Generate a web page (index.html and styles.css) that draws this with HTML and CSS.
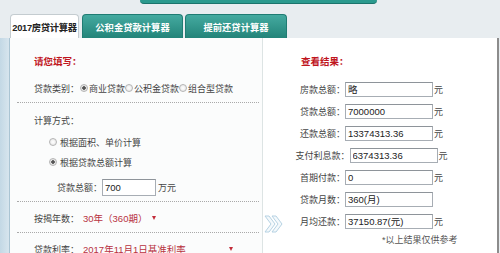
FILE: index.html
```html
<!DOCTYPE html>
<html>
<head>
  <meta charset="utf-8">
  <title>房贷计算器</title>
  <link rel="stylesheet" href="styles.css">
</head>
<body>
  <div class="topbar"><div class="topbtn"></div></div>

  <div class="tabs">
    <div class="tab active">2017房贷计算器</div>
    <div class="tab t2">公积金贷款计算器</div>
    <div class="tab t3">提前还贷计算器</div>
  </div>

  <div class="main">
    <div class="side"></div>
    <div class="panel">
      <!-- input side -->
      <div class="left">
        <div class="sec sec1">
          <div class="title">请您填写：</div>
          <div class="row">贷款类别：<input class="radio first" type="radio" name="kind" checked>商业贷款<input class="radio" type="radio" name="kind">公积金贷款<input class="radio" type="radio" name="kind">组合型贷款</div>
        </div>
        <div class="sec sec2">
          <div class="row">计算方式：</div>
          <div class="row ind r1"><input class="radio" type="radio" name="way">根据面积、单价计算</div>
          <div class="row ind r2"><input class="radio" type="radio" name="way" checked>根据贷款总额计算</div>
          <div class="row ind2">贷款总额：<input class="field amount" type="text" value="700">万元</div>
        </div>
        <div class="sec sec3">
          <div class="row">按揭年数：<span class="sel years">30年（360期）<i class="tri"></i></span></div>
        </div>
        <div class="sec sec4">
          <div class="row">贷款利率：<span class="sel rate">2017年11月1日基准利率<i class="tri"></i></span></div>
        </div>
      </div>

      <!-- result side -->
      <div class="right">
        <div class="title rtitle">查看结果：</div>
        <div class="results">
          <div class="res">房款总额：<input class="field" type="text" value="略"><span class="unit">元</span></div>
          <div class="res">贷款总额：<input class="field" type="text" value="7000000"><span class="unit">元</span></div>
          <div class="res">还款总额：<input class="field" type="text" value="13374313.36"><span class="unit">元</span></div>
          <div class="res">支付利息款：<input class="field" type="text" value="6374313.36"><span class="unit">元</span></div>
          <div class="res">首期付款：<input class="field" type="text" value="0"><span class="unit">元</span></div>
          <div class="res">贷款月数：<input class="field" type="text" value="360(月)"><span class="unit blank">元</span></div>
          <div class="res">月均还款：<input class="field" type="text" value="37150.87(元)"><span class="unit">元</span></div>
        </div>
        <div class="note">*以上结果仅供参考</div>
      </div>

      <svg class="chev" width="20" height="18" viewBox="0 0 20 18">
        <path d="M1 1 H5 L11 9 L5 17 H1 L7 9 Z" fill="#f4f9fc" stroke="#b6d2e3" stroke-width="1"/>
        <path d="M8 1 H12 L18 9 L12 17 H8 L14 9 Z" fill="#f4f9fc" stroke="#b6d2e3" stroke-width="1"/>
      </svg>
    </div>
  </div>
</body>
</html>
```

FILE: styles.css
```css
body { margin: 0; height: 253px; overflow: hidden; background: #e8edf0; font-family: "Liberation Sans", "Noto Sans CJK SC", sans-serif; font-size: 9px; color: #444; }

.topbar { height: 4px; }
.topbtn { margin-left: 140px; width: 237px; height: 3px; background: #2b9a8e; border-bottom: 1px solid #1b746c; border-radius: 0 0 6px 6px; }

.tabs { display: flex; gap: 2px; margin-top: 10px; padding-left: 10px; height: 24px; }
.tab { box-sizing: border-box; height: 24px; display: flex; align-items: center; justify-content: center; white-space: nowrap; border-radius: 4px 4px 0 0; font-size: 9.3px; font-weight: bold; color: #fff; background: linear-gradient(#44aaa0, #238479); border: 1px solid #1f7c73; border-bottom: none; }
.tab.active { width: 69px; padding: 0; letter-spacing: -0.3px; background: #fff; color: #222; border-color: #c4ccd0; margin-right: 1px; }
.tab.t2 { width: 101px; }
.tab.t3 { width: 102px; }

.main { display: flex; height: 215px; }
.side { width: 9px; background: linear-gradient(to right, #c3d8e5, #d7e5ee); border-right: 1px solid #aac4d3; }
.panel { position: relative; flex: 1; display: flex; margin-right: 1px; border-right: 2px solid #8c8c8c; background: #fff; }

.left { width: 242px; padding: 0 3px 0 7px; background: #fbfcfc; border-right: 1px solid #dde4e4; }
.sec { padding-left: 17px; border-bottom: 1px dotted #a9a9a9; }
.sec1 { padding-top: 16px; padding-bottom: 6px; }
.sec2 { padding-top: 9px; padding-bottom: 5px; }
.sec3 { padding-top: 8px; padding-bottom: 6px; }
.sec4 { padding-top: 8px; border-bottom: none; }

.title { height: 16px; line-height: 16px; color: #c0161e; font-weight: bold; font-size: 9.5px; }
.row { display: flex; align-items: center; height: 16px; white-space: nowrap; }
.sec1 .row { margin-top: 10px; }
.ind { padding-left: 15px; }
.r1 { margin-top: 6px; }
.r2 { margin-top: 4px; }
.ind2 { padding-left: 23px; height: 17px; margin-top: 9px; }

.radio { appearance: none; margin: 0 1px 0 0; width: 8px; height: 8px; border-radius: 50%; border: 1px solid #b4b4b4; background: radial-gradient(#fff, #e2e2e2); box-sizing: border-box; }
.radio.first { margin-left: 1px; }
.ind .radio { margin-right: 3px; }
.radio:checked { background: radial-gradient(#555 0, #555 1.5px, #e6e6e6 2px); }

.field { box-sizing: border-box; width: 88px; height: 15px; margin: 0; padding: 0 2px; border: 1px solid #a7adb4; border-top-color: #8e949a; background: #fff; font-family: inherit; font-size: 9.5px; color: #222; outline: none; }
.field.amount { width: 54px; height: 17px; margin-right: 2px; }

.sel { display: inline-flex; align-items: center; justify-content: space-between; margin-left: 4px; color: #b8323f; font-size: 9.5px; }
.sel.years { width: 73px; }
.sel.rate { width: 150px; }
.tri { width: 0; height: 0; border-top: 4px solid #c22c3a; border-left: 2.5px solid transparent; border-right: 2.5px solid transparent; }

.right { flex: 1; }
.rtitle { margin-top: 16px; padding-left: 38px; }
.results { width: 217px; margin-top: 11px; display: flex; flex-direction: column; gap: 6px; }
.res { display: flex; align-items: center; justify-content: center; height: 16px; white-space: nowrap; }
.unit { margin-left: 1px; }
.unit.blank { visibility: hidden; }
.note { margin-top: 4px; padding-left: 119px; color: #555; }

.chev { position: absolute; left: 254px; top: 177px; }
```
